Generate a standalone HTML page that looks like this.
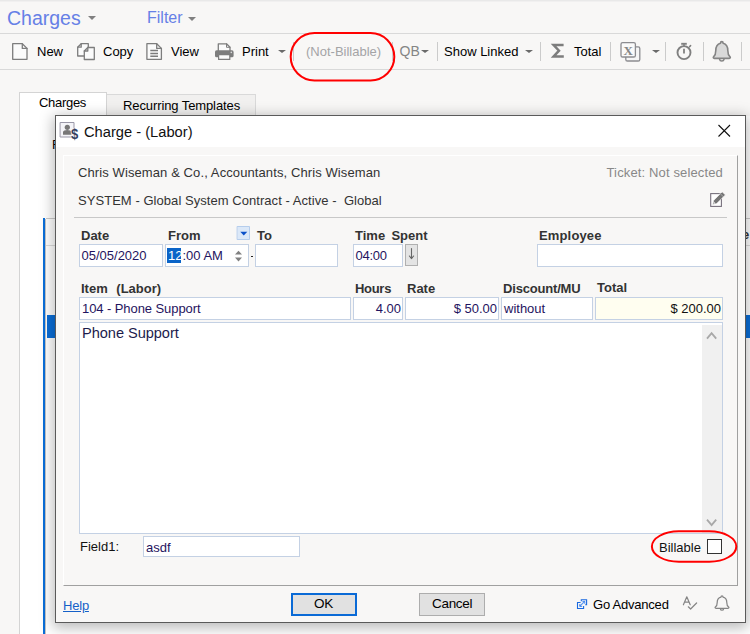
<!DOCTYPE html>
<html>
<head>
<meta charset="utf-8">
<title>Charges</title>
<style>
html,body{margin:0;padding:0;}
body{width:750px;height:634px;overflow:hidden;position:relative;background:#f8f7f6;font-family:"Liberation Sans",sans-serif;font-size:13px;color:#000;}
.a{position:absolute;white-space:nowrap;line-height:1;}
.hl{position:absolute;height:1px;background:#d9d9d9;}
.vl{position:absolute;width:1px;background:#cfcfcf;}
.tb{font-size:13px;color:#000;top:45px;}
.sep{position:absolute;top:42px;width:1px;height:19px;background:#cbcbcb;}
.arr{position:absolute;width:0;height:0;border-left:4.1px solid transparent;border-right:4.1px solid transparent;border-top:3.8px solid #6a6a6a;}
.inp{position:absolute;background:#fff;border:1px solid #c4d1e4;box-sizing:border-box;}
.lbl{font-weight:bold;font-size:13px;color:#333;}
.val{font-size:13px;color:#1f1460;}
svg{position:absolute;overflow:visible;}
</style>
</head>
<body>

<!-- header -->
<div class="a" style="left:0;top:0;width:750px;height:1px;background:#e9e9e9;"></div>
<div class="a" style="left:0;top:1px;width:750px;height:1px;background:#f1f0f0;"></div>
<div class="a" id="h1" style="left:7px;top:9px;font-size:19.5px;color:#6680e6;">Charges</div>
<div class="arr" style="left:87.6px;top:16px;border-top-color:#808080;border-width:4px 4.3px 0 4.3px;"></div>
<div class="a" id="h2" style="left:147px;top:10px;font-size:16px;color:#6680e6;">Filter</div>
<div class="arr" style="left:188px;top:16.6px;border-top-color:#808080;border-width:4.4px 4.4px 0 4.4px;"></div>

<div class="hl" style="left:0;top:33px;width:750px;"></div>
<div class="hl" style="left:0;top:69px;width:750px;"></div>

<!-- toolbar -->
<div class="a tb" style="left:37px;">New</div>
<div class="a tb" style="left:103px;">Copy</div>
<div class="a tb" style="left:171px;">View</div>
<div class="a tb" style="left:242px;">Print</div>
<div class="arr" style="left:278.2px;top:49.6px;"></div>
<div class="a tb" style="left:306px;color:#a4a4a6;">(Not-Billable)</div>
<div class="a tb" style="left:399.5px;color:#858585;font-size:14px;top:44px;">QB</div>
<div class="arr" style="left:421.1px;top:49.6px;"></div>
<div class="sep" style="left:437px;"></div>
<div class="sep" style="left:392px;"></div>
<div class="sep" style="left:293px;"></div>
<div class="a tb" style="left:444px;">Show Linked</div>
<div class="arr" style="left:524.6px;top:49.6px;"></div>
<div class="sep" style="left:540px;"></div>
<div class="a tb" style="left:574px;">Total</div>
<div class="sep" style="left:610px;"></div>
<div class="arr" style="left:652.3px;top:49.6px;"></div>
<div class="sep" style="left:665px;"></div>
<div class="sep" style="left:703px;"></div>
<div class="sep" style="left:741px;"></div>


<!-- toolbar icons -->
<svg width="750" height="80" style="left:0;top:0;" viewBox="0 0 750 80" fill="none" stroke="#7d7d7d" stroke-width="1.3" stroke-linejoin="round" stroke-linecap="round">
  <!-- New -->
  <path d="M12.7 43.7 H22.3 L27 48.4 V59.3 H12.7 Z" fill="#fbfbfb"/>
  <path d="M22.3 43.7 V48.4 H27"/>
  <!-- Copy -->
  <path d="M77.7 47.2 L81.2 43.7 H88.3 V56 H77.7 Z" fill="#fbfbfb"/>
  <path d="M77.7 47.2 H81.2 V43.7"/>
  <path d="M84.3 51 L87.8 47.5 H94.3 V59.5 H84.3 Z" fill="#fbfbfb"/>
  <path d="M84.3 51 H87.8 V47.5"/>
  <!-- View -->
  <path d="M146.9 43.7 H156.7 L161.4 48.4 V59.3 H146.9 Z" fill="#fbfbfb"/>
  <path d="M156.7 43.7 V48.4 H161.4"/>
  <path d="M150.3 50.4 H158 M150.3 53.4 H158 M150.3 56.3 H158" stroke-width="1.5" stroke-linecap="butt"/>
  <!-- Print -->
  <path d="M218.3 51 V43.8 H226.5 L230 47.3 V51" fill="#fbfbfb"/>
  <path d="M226.5 43.8 V47.3 H230" stroke-width="1"/>
  <rect x="215" y="50.3" width="18.6" height="7" rx="1.6" fill="#7d7d7d" stroke="none"/>
  <rect x="218.6" y="54.6" width="11.2" height="4.8" fill="#fbfbfb" stroke-width="1.2"/>
  <circle cx="231.3" cy="52.4" r="0.8" fill="#ddd" stroke="none"/>
  <!-- Sigma -->
  <path d="M563.6 45 H553.6 L559 50.7 L553.6 56.5 H563.8" stroke-width="2.5" stroke-linejoin="miter" stroke-linecap="butt"/>
  <!-- Excel -->
  <rect x="625.8" y="46.8" width="14" height="14.2" rx="1.6" fill="#f6f6f6" stroke="#8c8c90" stroke-width="1.3"/>
  <rect x="621" y="42.6" width="14.4" height="14.4" rx="1.6" fill="#fafafa" stroke="#8c8c90" stroke-width="1.3"/>
  <!-- Timer -->
  <circle cx="684" cy="52.6" r="6.5" stroke="#808080" stroke-width="1.9"/>
  <path d="M681.2 43.8 H686.8" stroke="#808080" stroke-width="1.9" stroke-linecap="butt"/>
  <path d="M684 44 V46" stroke="#808080" stroke-width="1.5" stroke-linecap="butt"/>
  <path d="M684 48.7 V53.6" stroke="#808080" stroke-width="1.8" stroke-linecap="butt"/>
  <path d="M689.6 46.6 L690.6 45.6" stroke="#808080" stroke-width="1.5"/>
  <!-- Bell -->
  <path transform="translate(721.8 0.5) scale(0.94 1) translate(-721.8 0)" d="M721.8 41.2 C722.7 41.2 723.2 41.9 723.2 42.8 C726.6 43.7 728.2 46.6 728.2 50 C728.2 53.6 729.1 55 730.4 56.1 C731.3 56.9 730.8 57.9 729.8 57.9 H713.8 C712.8 57.9 712.3 56.9 713.2 56.1 C714.5 55 715.4 53.6 715.4 50 C715.4 46.6 717 43.7 720.4 42.8 C720.4 41.9 720.9 41.2 721.8 41.2 Z" fill="#d9d9d9" stroke="#848484" stroke-width="1.7"/>
  <path transform="translate(0 0.5)" d="M719.6 58.8 C719.9 61 723.7 61 724 58.8" stroke="#848484" stroke-width="1.5"/>
</svg>
<div class="a" style="left:623.2px;top:44px;font-family:'Liberation Serif',serif;font-size:13px;font-weight:bold;color:#868686;width:10px;text-align:center;">X</div>

<!-- tabs and panel behind -->
<div class="a" style="left:19px;top:92px;width:740px;height:560px;background:#fff;border-left:1px solid #d4d4d4;"></div>
<div class="a" style="left:107px;top:92px;width:650px;height:24px;background:#f8f7f6;"></div>
<div class="a" style="left:19px;top:92px;width:87px;height:1px;background:#d4d4d4;"></div>
<div class="a" style="left:106px;top:92px;width:1px;height:24px;background:#d4d4d4;"></div>
<div class="a" style="left:107px;top:94px;width:149px;height:22px;background:#f1f0ef;border:1px solid #d9d9d9;border-left:none;box-sizing:border-box;"></div>
<div class="a" style="left:39px;top:96px;font-size:13px;letter-spacing:-0.3px;">Charges</div>
<div class="a" style="left:123px;top:99px;font-size:13px;letter-spacing:-0.1px;">Recurring Templates</div>
<div class="a" style="left:52px;top:138px;font-size:13px;">F</div>

<!-- grid behind -->
<div class="a" style="left:43px;top:218px;width:2px;height:420px;background:#0a6ed8;"></div>
<div class="a" style="left:45px;top:219px;width:1px;height:420px;background:#c4c4c4;"></div>
<div class="a" style="left:47px;top:315px;width:20px;height:23px;background:#0a6ed8;"></div>
<div class="a" style="left:740px;top:315px;width:10px;height:23px;background:#0a6ed8;"></div>
<div class="hl" style="left:46px;top:218px;width:710px;background:#ccc;"></div>
<div class="hl" style="left:46px;top:245px;width:710px;background:#ddd;"></div>
<div class="a" style="left:742px;top:228px;font-size:13px;color:#333;font-weight:bold;">e</div>

<!-- dialog -->
<div class="a" id="dlg" style="left:55px;top:115px;width:691px;height:508px;box-sizing:border-box;border:1px solid #5a5a5a;background:#fff;box-shadow:0 3px 13px 2px rgba(0,0,0,0.27);"></div>
<div class="a" style="left:56px;top:147px;width:689px;height:475px;background:#f8f7f6;"></div>
<div class="a" style="left:84px;top:125px;font-size:14.7px;color:#111;font-family:'Liberation Sans',sans-serif;">Charge - (Labor)</div>

<!-- inner panel -->
<div class="a" style="left:63px;top:155px;width:675px;height:431px;box-sizing:border-box;border-right:1px solid #a0a0a0;border-bottom:1px solid #a0a0a0;border-top:1px solid #fff;border-left:1px solid #fff;"></div>

<div class="a" id="t1" style="letter-spacing:0.1px;left:78px;top:166px;font-size:13px;color:#333;">Chris Wiseman &amp; Co., Accountants, Chris Wiseman</div>
<div class="a" id="t2" style="letter-spacing:0.05px;left:78px;top:194px;font-size:13px;color:#333;">SYSTEM - Global System Contract - Active -&nbsp; Global</div>
<div class="a" id="t3" style="letter-spacing:0.14px;right:27px;top:166px;font-size:13px;color:#888;">Ticket: Not selected</div>
<div class="hl" style="left:74px;top:217px;width:653px;background:#c8c8c8;"></div>

<div class="a lbl" style="left:81px;top:229px;">Date</div>
<div class="a lbl" style="left:168px;top:229px;">From</div>
<div class="a lbl" style="left:257px;top:229px;">To</div>
<div class="a lbl" style="left:355px;top:229px;word-spacing:2.7px;">Time Spent</div>
<div class="a lbl" style="left:539px;top:229px;letter-spacing:0.15px;">Employee</div>

<div class="inp" style="left:79px;top:244px;width:84px;height:23px;"></div>
<div class="a val" style="left:81.5px;top:249px;">05/05/2020</div>
<div class="inp" style="left:165px;top:244px;width:84px;height:23px;"></div>
<div class="a" style="left:167px;top:248px;width:14px;height:15px;background:#0a64c8;"></div>
<div class="a val" style="left:168px;top:249px;"><span style="color:#fff;">12</span>:00 AM</div>
<div class="a" style="left:250.5px;top:256px;width:2.7px;height:1px;background:#222;"></div>
<div class="inp" style="left:255px;top:244px;width:83px;height:23px;"></div>
<div class="inp" style="left:353px;top:244px;width:50px;height:23px;"></div>
<div class="a val" style="left:355.5px;top:249px;letter-spacing:-0.25px;">04:00</div>
<div class="a" style="left:405px;top:244px;width:13px;height:22px;box-sizing:border-box;background:#e4e4e4;border:1px solid #b0b0b0;"></div>
<div class="inp" style="left:537px;top:244px;width:186px;height:23px;"></div>

<div class="a lbl" style="left:81px;top:282px;word-spacing:5px;">Item (Labor)</div>
<div class="a lbl" style="left:355px;top:282px;letter-spacing:-0.3px;">Hours</div>
<div class="a lbl" style="left:407px;top:282px;">Rate</div>
<div class="a lbl" style="left:503px;top:282px;letter-spacing:-0.18px;">Discount/MU</div>
<div class="a lbl" style="left:597px;top:281px;">Total</div>

<div class="inp" style="left:79px;top:297px;width:272px;height:23px;"></div>
<div class="a val" style="left:82px;top:302px;letter-spacing:-0.08px;">104 - Phone Support</div>
<div class="inp" style="left:353px;top:297px;width:50px;height:23px;"></div>
<div class="a val" style="right:349px;top:302px;">4.00</div>
<div class="inp" style="left:405px;top:297px;width:94px;height:23px;"></div>
<div class="a val" style="right:253px;top:302px;">$ 50.00</div>
<div class="inp" style="left:501px;top:297px;width:92px;height:23px;"></div>
<div class="a val" style="left:504px;top:302px;">without</div>
<div class="inp" style="left:595px;top:297px;width:128px;height:23px;background:#fffef0;"></div>
<div class="a val" style="right:29px;top:302px;color:#111;">$ 200.00</div>

<div class="inp" style="left:79px;top:322px;width:644px;height:212px;"></div>
<div class="a" style="left:702px;top:325px;width:20px;height:208px;background:#f0f0f0;"></div>
<div class="a" style="left:82px;top:326px;font-size:14.6px;letter-spacing:-0.05px;color:#1c1c4c;">Phone Support</div>

<div class="a" style="left:80px;top:540px;font-size:13px;color:#111;">Field1:</div>
<div class="inp" style="left:143px;top:536px;width:157px;height:21px;"></div>
<div class="a val" style="left:146px;top:541px;font-size:13px;">asdf</div>

<div class="a" style="left:659px;top:541px;font-size:13px;color:#111;">Billable</div>
<div class="a" style="left:707px;top:539px;width:15px;height:15px;box-sizing:border-box;border:1px solid #333;background:#fff;"></div>

<!-- footer -->
<div class="a" style="left:63px;top:599px;font-size:13px;letter-spacing:-0.2px;color:#1560c8;text-decoration:underline;">Help</div>
<div class="a" style="left:291px;top:593px;width:66px;height:23px;box-sizing:border-box;border:2px solid #0a6ad6;background:#e1e1e1;"></div>
<div class="a" style="left:314px;top:597px;font-size:13.5px;letter-spacing:-0.3px;color:#000;">OK</div>
<div class="a" style="left:419px;top:593px;width:66px;height:23px;box-sizing:border-box;border:1px solid #adadad;background:#e1e1e1;"></div>
<div class="a" style="left:432px;top:597px;font-size:13.5px;letter-spacing:-0.3px;color:#000;">Cancel</div>
<div class="a" style="left:593px;top:598px;font-size:13px;letter-spacing:-0.22px;color:#000;">Go Advanced</div>


<!-- dialog icons -->
<svg width="750" height="634" style="left:0;top:0;" viewBox="0 0 750 634" fill="none" stroke-linejoin="round" stroke-linecap="round">
  <!-- title icon -->
  <rect x="60.5" y="122.5" width="13.5" height="14.5" fill="#f4f4f8" stroke="#9a98a8" stroke-width="1"/>
  <circle cx="67.3" cy="127.3" r="2.6" fill="#777"/>
  <path d="M63 134.8 V132 C63 129.2 71.4 129.2 71.4 132 V134.8 Z" fill="#777"/>
  <!-- close X -->
  <path d="M718.5 125 L730 136.5 M730 125 L718.5 136.5" stroke="#111" stroke-width="1.1" stroke-linecap="butt"/>
  <!-- pencil edit -->
  <rect x="710.7" y="193.6" width="10.7" height="12.8" fill="#fff" stroke="#77707c" stroke-width="1.1" stroke-linejoin="miter"/>
  <path d="M722.3 191.9 L725.3 194.9 L716.7 203.5 L712.7 204.5 L713.7 200.5 Z" fill="#757575" stroke="#f8f7f6" stroke-width="0.6"/>
  <path d="M720.5 193.9 L723.3 196.7" stroke="#cfcfcf" stroke-width="0.6"/>
  <circle cx="714.3" cy="203" r="0.7" fill="#fff"/>
  <!-- From dropdown -->
  <rect x="237.5" y="226.5" width="12" height="13" fill="#dbe8f8" stroke="#b5cdec" stroke-width="1"/>
  <path d="M240.3 231.8 H247.3 L243.8 235.6 Z" fill="#0a50c8"/>
  <!-- spinner -->
  <path d="M235 254.6 L238.5 250.7 L242 254.6 Z" fill="#808080"/>
  <path d="M235 257.6 L238.5 261.5 L242 257.6 Z" fill="#808080"/>
  <!-- down arrow button -->
  <path d="M411.5 248.6 V258.3 M409.4 256 L411.5 258.6 L413.6 256" stroke="#666" stroke-width="1.1"/>
  <!-- scroll chevrons -->
  <path d="M707 338.6 L711.6 333.2 L716.2 338.6" stroke="#a8a8a8" stroke-width="1.8" stroke-linejoin="miter" stroke-linecap="butt"/>
  <path d="M707 519.6 L711.6 525 L716.2 519.6" stroke="#a8a8a8" stroke-width="1.8" stroke-linejoin="miter" stroke-linecap="butt"/>
  <!-- go advanced -->
  <path d="M581.3 601.3 V599.7 H586.6 V604.8 H585.2" stroke="#1a6ae0" stroke-width="1.1" stroke-linejoin="miter" stroke-linecap="butt"/>
  <path d="M580.6 602.5 H577.5 V608.5 H583.6 V606" stroke="#1a6ae0" stroke-width="1.1" stroke-linejoin="miter" stroke-linecap="butt"/>
  <path d="M580 606 L584.4 601.6" stroke="#5a98f2" stroke-width="1.1"/>
  <path d="M582.8 601.4 H584.8 V603.4 M579.8 604.4 V606.4 H581.8" stroke="#3a80ec" stroke-width="0.9"/>
  <!-- spell check -->
  <path d="M683.4 604.8 L686.8 596.8 L690.2 604.8 M684.6 602.2 H689" stroke="#858585" stroke-width="1.2"/>
  <path d="M688.3 606.8 L690.6 609 L696.6 603" stroke="#858585" stroke-width="1.2"/>
  <!-- footer bell -->
  <path d="M722 595.9 C722.6 595.9 723 596.4 723 597.1 C725.6 597.7 726.8 599.8 726.8 602.4 C726.8 605.2 727.5 606.2 728.6 607 C729.2 607.6 728.9 608.3 728.1 608.3 H715.9 C715.1 608.3 714.8 607.6 715.4 607 C716.5 606.2 717.2 605.2 717.2 602.4 C717.2 599.8 718.4 597.7 721 597.1 C721 596.4 721.4 595.9 722 595.9 Z" stroke="#858585" stroke-width="1.25"/>
  <path d="M720.4 608.9 C720.6 610.7 723.4 610.7 723.6 608.9" stroke="#858585" stroke-width="1.2"/>
</svg>
<div class="a" style="left:71.3px;top:126.5px;font-size:14.5px;font-weight:bold;color:#34405e;text-shadow:0 0 1.5px #fff,0 0 1.5px #fff,0 0 1px #fff;transform:scaleX(0.9);transform-origin:0 0;font-family:'Liberation Sans',sans-serif;">$</div>

<!-- red annotations -->
<svg width="750" height="634" style="left:0;top:0;" viewBox="0 0 750 634">
  <rect x="290.7" y="33" width="103.6" height="47.5" rx="23.75" ry="23.75" fill="none" stroke="#ff0000" stroke-width="2"/>
  <rect x="651.9" y="531.3" width="84.4" height="30.4" rx="27" ry="15.2" fill="none" stroke="#ff0000" stroke-width="2"/>
</svg>

</body>
</html>
